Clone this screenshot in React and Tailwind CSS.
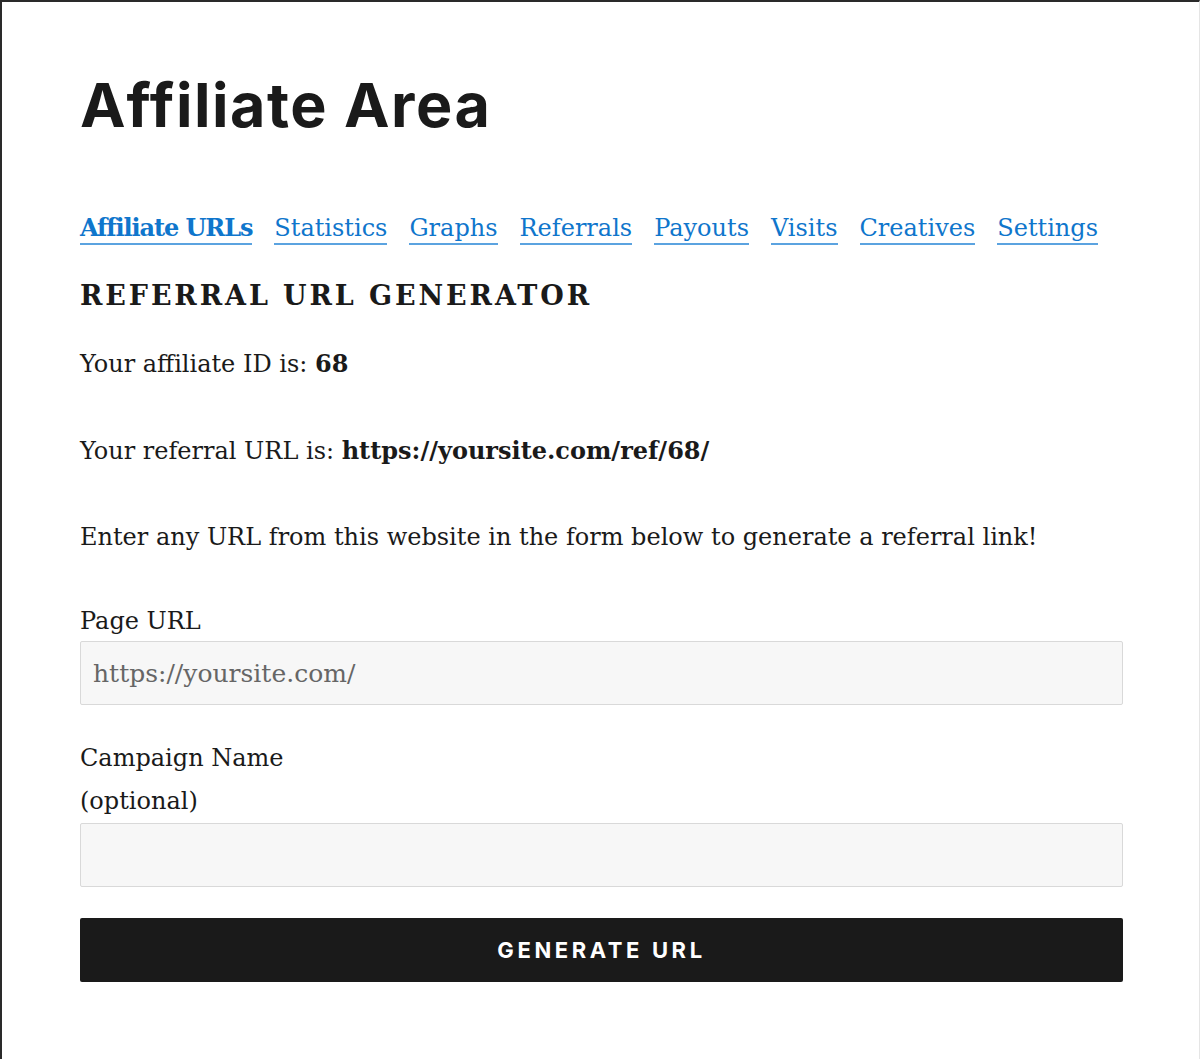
import { useState } from "react";

const serif = "font-['DejaVu_Serif','Liberation_Serif',serif]";
const sans = "font-['Inter','Open_Sans',sans-serif]";

const tabs = [
  "Affiliate URLs",
  "Statistics",
  "Graphs",
  "Referrals",
  "Payouts",
  "Visits",
  "Creatives",
  "Settings",
];

export default function App() {
  const [pageUrl, setPageUrl] = useState("");
  const [campaign, setCampaign] = useState("");

  return (
    <div className="min-h-[1059px] w-[1200px] border-l-2 border-t-2 border-r border-l-[#2a2a2a] border-t-[#2a2a2a] border-r-[#e5e5e5] bg-white">
      <div className={`${serif} w-[1121px] pl-[78px] pt-[70px] text-[#1a1a1a]`}>
        <h1 className={`${sans} text-[61px] font-bold leading-[66px] tracking-[1.5px]`}>
          Affiliate Area
        </h1>

        {/* tabs */}
        <ul className="mt-[70px] flex flex-wrap gap-x-[22px] text-[24px] leading-[40px]">
          {tabs.map((tab, i) => (
            <li key={tab}>
              <a
                href="#"
                className={`border-b-2 border-[#5ba3e0] pb-[1px] text-[#0f76cc] ${
                  i === 0 ? "font-bold tracking-[-1.1px]" : ""
                }`}
              >
                {tab}
              </a>
            </li>
          ))}
        </ul>

        <h2 className="mt-[30px] text-[27px] font-bold uppercase leading-[36px] tracking-[2.9px]">
          Referral URL Generator
        </h2>

        <div className="mt-[28px] text-[24px] leading-[43px]">
          <p>
            Your affiliate ID is: <strong>68</strong>
          </p>
          <p className="mt-[43px]">
            Your referral URL is: <strong>https://yoursite.com/ref/68/</strong>
          </p>
          <p className="mt-[43px]">
            Enter any URL from this website in the form below to generate a referral link!
          </p>
        </div>

        <form onSubmit={(e) => e.preventDefault()} className="mt-[41px] text-[24px]">
          <label className="block leading-[43px]">Page URL</label>
          <input
            type="text"
            value={pageUrl}
            onChange={(e) => setPageUrl(e.target.value)}
            placeholder="https://yoursite.com/"
            className="-mt-[2px] block h-[64px] w-[1043px] rounded-[2px] border border-[#d9d9d9] bg-[#f7f7f7] px-[12px] text-[25px] text-[#1a1a1a] outline-none placeholder:text-[#666666]"
          />

          <label className="mt-[32px] block leading-[43px]">
            Campaign Name
            <br />
            (optional)
          </label>
          <input
            type="text"
            value={campaign}
            onChange={(e) => setCampaign(e.target.value)}
            className="mt-0 block h-[64px] w-[1043px] rounded-[2px] border border-[#d9d9d9] bg-[#f7f7f7] px-[12px] text-[25px] outline-none"
          />

          <button
            type="submit"
            className={`${sans} mt-[31px] flex h-[64px] w-[1043px] items-center justify-center rounded-[2px] bg-[#1a1a1a] text-[22px] font-bold uppercase tracking-[3.6px] text-white`}
          >
            Generate URL
          </button>
        </form>
      </div>
    </div>
  );
}
